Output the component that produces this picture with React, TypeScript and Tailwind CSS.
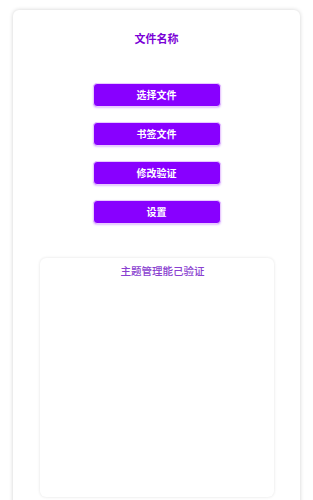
import React from 'react';

const buttons = ['选择文件', '书签文件', '修改验证', '设置'];

export default function App() {
  return (
    <div
      className="min-h-[500px] bg-white pt-[10px] px-[13px]"
      style={{ fontFamily: '"Noto Sans", "Noto Sans CJK SC", sans-serif' }}
    >
      <div className="w-[287px] h-[500px] rounded-[6px] bg-white shadow-[0_0_4px_rgba(0,0,0,0.18)] flex flex-col items-center pt-[22px]">
        <h1 className="text-[11px] leading-[14px] font-bold text-[#7a00d6]">文件名称</h1>

        <div className="mt-[37px] flex flex-col gap-[15px]">
          {buttons.map((label) => (
            <button
              key={label}
              className="w-[128px] h-[24px] rounded-[4px] bg-[#8800ff] text-white text-[10px] font-bold border border-[#e9c9ff] shadow-[0_1px_2px_rgba(136,0,255,0.25)]"
            >
              {label}
            </button>
          ))}
        </div>

        <div className="mt-[34px] w-[234px] h-[239px] rounded-[6px] bg-white shadow-[0_0_3px_rgba(0,0,0,0.12)] flex flex-col items-center pt-[6px] pl-[12px]">
          <p className="text-[10.5px] leading-[14px] font-medium text-[#8a3fd0]">主题管理能己验证</p>
        </div>
      </div>
    </div>
  );
}
